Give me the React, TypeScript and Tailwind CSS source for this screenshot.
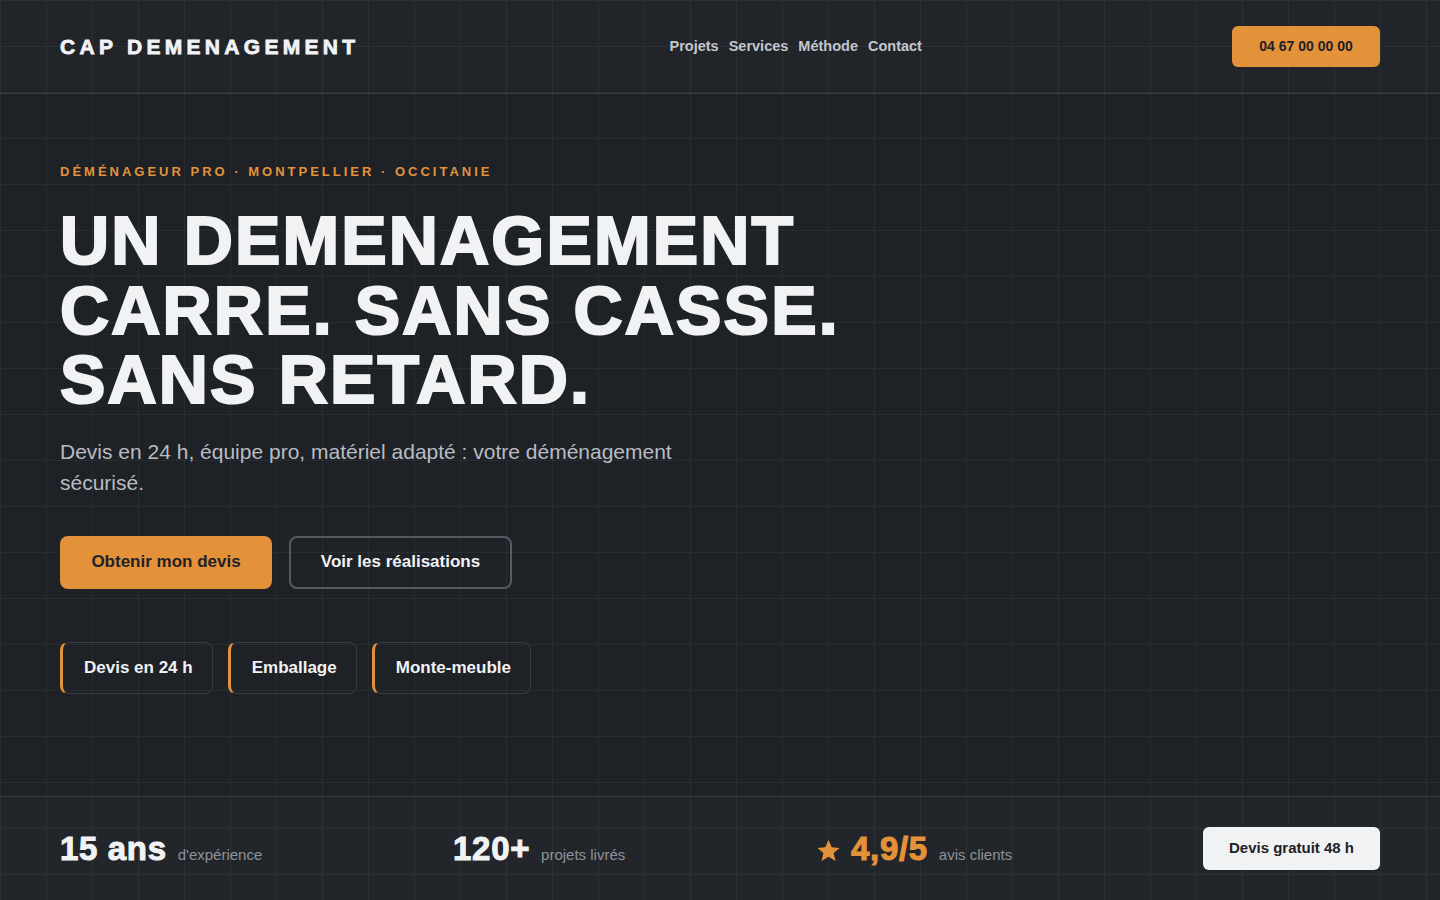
export default function App() {
  const heavy = "[-webkit-text-stroke:2.2px_#f1f2f4]"
  return (
    <div className="min-h-screen flex flex-col bg-[#1e2126] bg-[linear-gradient(rgba(255,255,255,0.045)_1px,transparent_1px),linear-gradient(90deg,rgba(255,255,255,0.045)_1px,transparent_1px)] bg-size-[46px_46px] font-['Liberation_Sans',Arial,sans-serif] text-[#f1f2f4]">
      {/* header */}
      <header className="h-[94px] shrink-0 flex items-center justify-between px-[60px] border-b border-white/10 bg-white/[0.015]">
        <div className="text-[21px] font-bold tracking-[4.3px] text-[#f1f3f6] [-webkit-text-stroke:0.8px_#f1f3f6]">
          CAP DEMENAGEMENT
        </div>
        <nav className="flex items-center gap-[10px] text-[14.5px] font-bold text-[#c3c6cc]">
          <a>Projets</a>
          <a>Services</a>
          <a>Méthode</a>
          <a>Contact</a>
        </nav>
        <button className="h-[41px] w-[148px] rounded-md bg-[#e3923a] text-[14px] font-bold text-[#1e2126]">
          04 67 00 00 00
        </button>
      </header>

      {/* hero */}
      <main className="flex-1 px-[60px] pt-[68px]">
        <p className="text-[13px] leading-[20px] font-bold tracking-[3px] text-[#e3923a]">
          DÉMÉNAGEUR PRO · MONTPELLIER · OCCITANIE
        </p>
        <h1 className={`mt-[24px] text-[68px] leading-[69.5px] font-bold tracking-[0.032em] text-[#f1f2f4] ${heavy}`}>
          UN DEMENAGEMENT
          <br />
          CARRE. SANS CASSE.
          <br />
          SANS RETARD.
        </h1>
        <p className="mt-[21px] max-w-[660px] text-[21px] leading-[31px] text-[#b8bcc3]">
          Devis en 24 h, équipe pro, matériel adapté : votre déménagement sécurisé.
        </p>
        <div className="mt-[38px] flex gap-[17px]">
          <button className="h-[53px] w-[212px] rounded-lg bg-[#e3923a] text-[17px] font-bold text-[#1e2126]">
            Obtenir mon devis
          </button>
          <button className="h-[53px] w-[223px] rounded-lg border-2 border-[#565a62] text-[17px] font-bold text-[#f1f2f4]">
            Voir les réalisations
          </button>
        </div>
        <div className="mt-[53px] flex gap-[15px]">
          {["Devis en 24 h", "Emballage", "Monte-meuble"].map((t) => (
            <div
              key={t}
              className="h-[52px] flex items-center rounded-lg border border-[#373a41] border-l-[3px] border-l-[#e3923a] pl-[21px] pr-[19px] text-[17px] font-bold text-[#f1f2f4]"
            >
              {t}
            </div>
          ))}
        </div>
      </main>

      {/* stats */}
      <footer className="h-[104px] shrink-0 flex items-center justify-between px-[60px] border-t border-white/10 bg-white/[0.02]">
        <div className="flex items-baseline gap-[11px]">
          <span className="text-[33px] font-bold tracking-[0.02em] text-[#f1f2f4] [-webkit-text-stroke:1px_#f1f2f4]">15 ans</span>
          <span className="text-[15px] text-[#8e929a]">d'expérience</span>
        </div>
        <div className="flex items-baseline gap-[11px]">
          <span className="text-[33px] font-bold tracking-[0.02em] text-[#f1f2f4] [-webkit-text-stroke:1px_#f1f2f4]">120+</span>
          <span className="text-[15px] text-[#8e929a]">projets livrés</span>
        </div>
        <div className="flex items-baseline gap-[11px]">
          <span className="flex items-baseline gap-[10px] text-[33px] font-bold tracking-[0.02em] text-[#e3923a] [-webkit-text-stroke:1px_#e3923a]">
            <svg viewBox="0 0 24 24" className="w-[25px] h-[25px] self-center translate-y-[2px]" fill="#e3923a">
              <path d="M12 1.8l3.1 7.1 7.6.6-5.8 5 1.8 7.5L12 18l-6.7 4 1.8-7.5-5.8-5 7.6-.6z" />
            </svg>
            4,9/5
          </span>
          <span className="text-[15px] text-[#8e929a]">avis clients</span>
        </div>
        <button className="h-[43px] w-[177px] rounded-md bg-[#f1f2f4] text-[15px] font-bold text-[#1e2126]">
          Devis gratuit 48 h
        </button>
      </footer>
    </div>
  )
}
